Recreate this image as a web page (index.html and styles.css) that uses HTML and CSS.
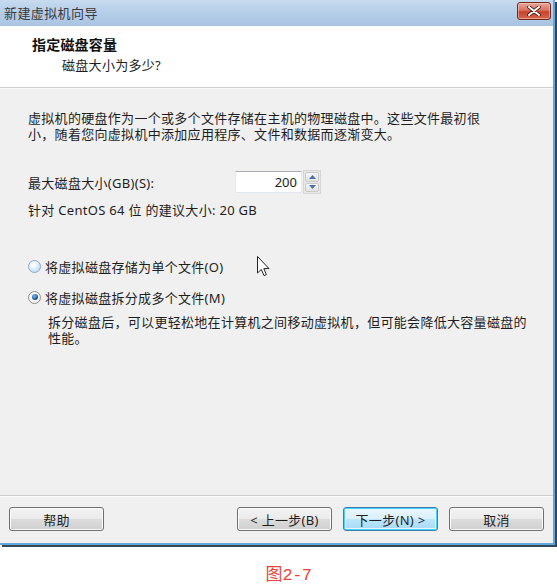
FILE: index.html
```html
<!DOCTYPE html>
<html lang="zh-CN">
<head>
<meta charset="utf-8">
<title>新建虚拟机向导</title>
<link rel="stylesheet" href="styles.css">
</head>
<body>
<div class="window">
  <div class="titlebar">
    <span class="title">新建虚拟机向导</span>
    <span class="close">
      <svg width="14" height="10" viewBox="0 0 14 10">
        <path d="M2 1 L12 9 M12 1 L2 9" stroke="#4a1a12" stroke-width="3.6" stroke-linecap="round"/>
        <path d="M2 1 L12 9 M12 1 L2 9" stroke="#ffffff" stroke-width="2" stroke-linecap="round"/>
      </svg>
    </span>
  </div>
  <div class="header">
    <div class="h-title">指定磁盘容量</div>
    <div class="h-sub">磁盘大小为多少?</div>
  </div>
  <div class="content">
    <p class="intro">虚拟机的硬盘作为一个或多个文件存储在主机的物理磁盘中。这些文件最初很<br>小，随着您向虚拟机中添加应用程序、文件和数据而逐渐变大。</p>
    <div class="size-row">
      <span class="size-label">最大磁盘大小(GB)(S):</span>
      <span class="spin-field">200</span>
      <span class="spin-btns">
        <span class="spin-btn"><svg width="7" height="4" viewBox="0 0 7 4"><path d="M0 4 L3.5 0 L7 4 Z" fill="#4d6fa8"/></svg></span>
        <span class="spin-btn"><svg width="7" height="4" viewBox="0 0 7 4"><path d="M0 0 L3.5 4 L7 0 Z" fill="#4d6fa8"/></svg></span>
      </span>
    </div>
    <div class="rec">针对 CentOS 64 位 的建议大小: 20 GB</div>
    <div class="radio-row first"><span class="radio"></span><span>将虚拟磁盘存储为单个文件(O)</span></div>
    <div class="radio-row second"><span class="radio checked"><span class="dot"></span></span><span>将虚拟磁盘拆分成多个文件(M)</span></div>
    <p class="desc">拆分磁盘后，可以更轻松地在计算机之间移动虚拟机，但可能会降低大容量磁盘的<br>性能。</p>
    <svg class="cursor" width="13" height="21" viewBox="0 0 13 21">
      <path d="M0.5 0.5 L0.5 17 L4.3 13.4 L7 19.6 L9.4 18.6 L6.8 12.6 L12 12.6 Z" fill="#ffffff" stroke="#222222" stroke-width="1" stroke-linejoin="round"/>
    </svg>
  </div>
  <div class="footer">
    <span class="btn">帮助</span>
    <div class="btn-group">
      <span class="btn">&lt; 上一步(B)</span>
      <span class="btn default">下一步(N) &gt;</span>
      <span class="btn">取消</span>
    </div>
  </div>
</div>
<div class="caption">图<span class="num">2-7</span></div>
</body>
</html>
```

FILE: styles.css
```css
html, body {
  margin: 0;
  padding: 0;
  background: #ffffff;
}
body {
  width: 557px;
  height: 584px;
  overflow: hidden;
  font-family: "Noto Sans", "Noto Sans CJK SC", sans-serif;
  font-size: 13px;
  color: #1e1e1e;
}
.window {
  width: 553px;
  height: 543px;
  border-right: 2px solid #62a8dc;
  border-bottom: 2px solid #62a8dc;
  box-shadow: 2px 2px 0 #33495a;
  background: #f0f0f0;
  display: flex;
  flex-direction: column;
}
.titlebar {
  height: 26px;
  flex: none;
  background: linear-gradient(#c7daef, #b2cbe7 60%, #a9c4e3);
  display: flex;
  align-items: center;
  justify-content: space-between;
  padding: 0 2px 0 4px;
  box-sizing: border-box;
}
.title {
  font-size: 13px;
  letter-spacing: 0.4px;
  color: #3a3a3a;
  line-height: 26px;
}
.close {
  width: 34px;
  height: 18px;
  box-sizing: border-box;
  border: 1px solid #6d2a20;
  border-radius: 3px;
  background: linear-gradient(#e6a89c, #d8745f 45%, #c6432b 55%, #d2674e);
  box-shadow: inset 0 0 0 1px rgba(255, 210, 200, 0.5);
  display: flex;
  align-items: center;
  justify-content: center;
  margin-top: -4px;
}
.header {
  height: 62px;
  flex: none;
  background: #ffffff;
  border-bottom: 1px solid #cfcfcf;
  box-sizing: border-box;
  padding: 10px 0 0 32px;
}
.h-title {
  font-weight: bold;
  font-size: 14px;
  line-height: 18px;
  letter-spacing: 0.2px;
  color: #111;
}
.h-sub {
  padding-left: 30px;
  margin-top: 2px;
  line-height: 18px;
  letter-spacing: 0.3px;
}
.content {
  flex: 1;
  position: relative;
  padding: 21px 0 0 28px;
  border-top: 1px solid #f8f8f8;
}
.intro, .desc {
  margin: 0;
  line-height: 16px;
  letter-spacing: 0.3px;
}
.size-row {
  display: flex;
  align-items: center;
  margin-top: 28px;
  height: 24px;
}
.size-label {
  width: 207px;
  letter-spacing: 0.3px;
}
.spin-field {
  width: 67px;
  height: 22px;
  box-sizing: border-box;
  background: #ffffff;
  border: 1px solid #e3e9ef;
  border-top-color: #abadb3;
  text-align: right;
  padding-right: 4px;
  line-height: 20px;
  font-size: 13px;
}
.spin-btns {
  margin-left: 1px;
  width: 18px;
  height: 24px;
  display: flex;
  flex-direction: column;
  gap: 1px;
  box-sizing: border-box;
  border: 1px solid #d6d6d6;
  background: #e8e8e8;
  padding: 1px;
}
.spin-btn {
  flex: 1;
  display: flex;
  align-items: center;
  justify-content: center;
  background: linear-gradient(#f6f6f6, #e2e2e2);
  border: 1px solid #c9c9c9;
  border-radius: 2px;
}
.rec {
  margin-top: 8px;
  line-height: 16px;
  letter-spacing: 0.3px;
}
.radio-row {
  display: flex;
  align-items: center;
  height: 16px;
  letter-spacing: 0.3px;
}
.radio-row.first {
  margin-top: 40px;
}
.radio-row.second {
  margin-top: 15px;
}
.radio {
  width: 13px;
  height: 13px;
  box-sizing: border-box;
  border-radius: 50%;
  border: 1px solid #8aa9c9;
  background: radial-gradient(circle at 40% 35%, #ffffff 10%, #d4e9f8 55%, #a9cfee 100%);
  margin-right: 4px;
  display: flex;
  align-items: center;
  justify-content: center;
  flex: none;
}
.radio.checked {
  border-color: #8e8f8f;
  background: radial-gradient(circle at 40% 35%, #ffffff 20%, #e4e4e4 100%);
}
.dot {
  width: 6px;
  height: 6px;
  border-radius: 50%;
  background: radial-gradient(circle at 40% 35%, #7ac0ef, #1e5a9a 60%, #123d6e);
}
.desc {
  margin-top: 9px;
  padding-left: 20px;
}
.cursor {
  position: absolute;
  left: 257px;
  top: 167px;
}
.footer {
  height: 48px;
  flex: none;
  border-top: 1px solid #cdcdcd;
  box-shadow: inset 0 1px 0 #fafafa;
  box-sizing: border-box;
  padding: 11px 9px 0 9px;
  display: flex;
  justify-content: space-between;
  align-items: flex-start;
}
.btn-group {
  display: flex;
  gap: 11px;
}
.btn {
  width: 95px;
  height: 24px;
  box-sizing: border-box;
  border: 1px solid #707070;
  border-radius: 3px;
  background: linear-gradient(#f2f2f2, #ebebeb 50%, #dddddd 50%, #cfcfcf);
  box-shadow: inset 0 0 0 1px #fbfbfb;
  display: flex;
  align-items: center;
  justify-content: center;
  letter-spacing: 0.3px;
  color: #1e1e1e;
}
.btn.default {
  border-color: #3c7fb1;
  background: linear-gradient(#eaf6fd, #d9f0fc 50%, #bee6fd 50%, #a7d9f5);
  box-shadow: inset 0 0 0 1px #48d0f8, inset 0 0 0 2px #e4f6fd;
}
.caption {
  text-align: center;
  margin-top: 18px;
  padding-left: 20px;
  font-family: "Noto Sans CJK SC", sans-serif;
  font-size: 17px;
  line-height: 20px;
  color: #e6453b;
}
.num {
  font-family: "Liberation Mono", "DejaVu Sans Mono", monospace;
  font-size: 17px;
  letter-spacing: -0.5px;
}
```
